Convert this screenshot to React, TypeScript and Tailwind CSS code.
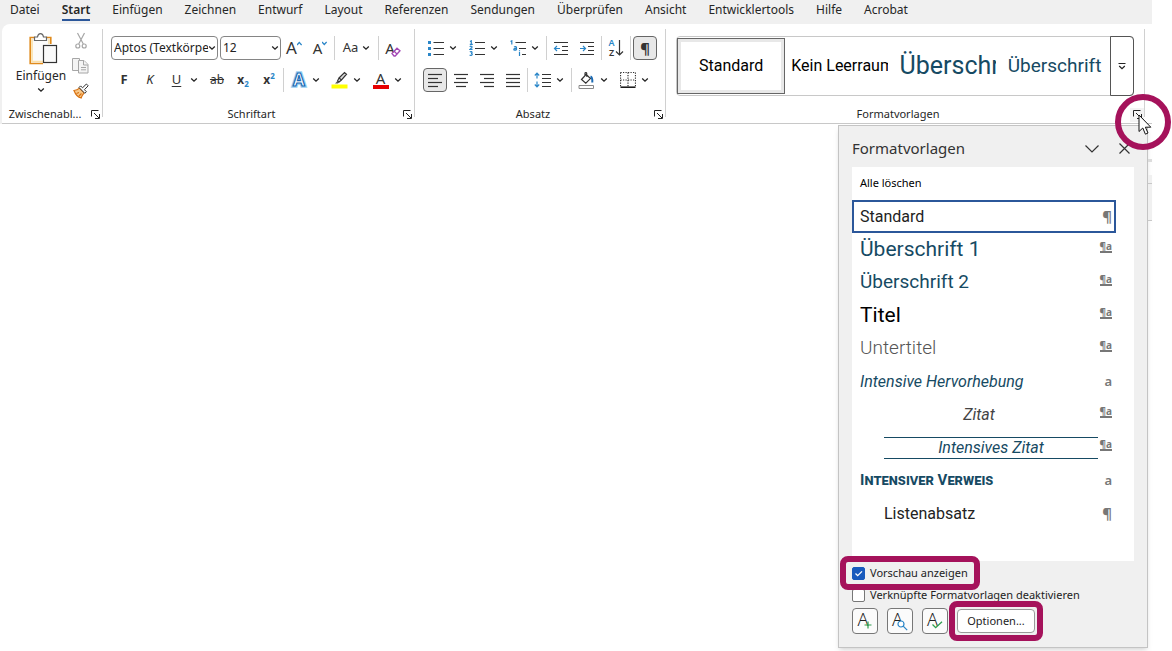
import { useState, type ReactNode } from 'react'
import clsx from 'clsx'

const tabs = [
  'Datei', 'Start', 'Einfügen', 'Zeichnen', 'Entwurf', 'Layout', 'Referenzen',
  'Sendungen', 'Überprüfen', 'Ansicht', 'Entwicklertools', 'Hilfe', 'Acrobat',
]

const gallery = [
  { name: 'Standard', className: 'text-base text-black text-center' },
  { name: 'Kein Leerraum', className: 'text-base text-black' },
  { name: 'Überschrift 1', className: 'text-[25px] text-[#164a63]' },
  { name: 'Überschrift 2', className: 'text-[19px] text-[#164a63]' },
]

type Mark = 'para' | 'char' | 'linked'

const styles: { name: string; mark: Mark; className: string }[] = [
  { name: 'Standard', mark: 'para', className: 'text-base text-[#222]' },
  { name: 'Überschrift 1', mark: 'linked', className: 'text-[21px] text-[#164a63]' },
  { name: 'Überschrift 2', mark: 'linked', className: 'text-[19px] text-[#164a63]' },
  { name: 'Titel', mark: 'linked', className: 'text-[21px] text-black' },
  { name: 'Untertitel', mark: 'linked', className: 'text-[19px] font-light text-[#555]' },
  { name: 'Intensive Hervorhebung', mark: 'char', className: 'text-base italic text-[#164a63]' },
  { name: 'Zitat', mark: 'linked', className: 'text-base italic text-center text-[#444]' },
  { name: 'Intensives Zitat', mark: 'linked', className: 'text-base italic text-center text-[#164a63] leading-5 border-y border-[#164a63] ml-6' },
  { name: 'Intensiver Verweis', mark: 'char', className: 'text-[15px] font-bold text-[#164a63] [font-variant:small-caps]' },
  { name: 'Listenabsatz', mark: 'para', className: 'text-base text-[#222] pl-6' },
]

function Chevron() {
  return (
    <svg width="8" height="6" viewBox="0 0 8 6" fill="none" stroke="#222" strokeWidth="1.3" className="shrink-0">
      <path d="M1.2 1.6 4 4.2 6.8 1.6" />
    </svg>
  )
}

function Tool({ label, active, children }: { label: string; active?: boolean; children: ReactNode }) {
  return (
    <button
      aria-label={label}
      className={clsx(
        'flex h-6 shrink-0 items-center justify-center text-[#333]',
        active ? 'mx-px w-6 rounded border border-[#666] bg-[#e8e8e8]' : 'w-[26px]',
      )}
    >
      {children}
    </button>
  )
}

function Split({ label, children }: { label: string; children: ReactNode }) {
  return (
    <button aria-label={label} className="flex h-6 w-[41px] shrink-0 items-center text-[#333]">
      <span className="flex w-[27px] justify-center">{children}</span>
      <Chevron />
    </button>
  )
}

function Sep() {
  return <span className="mx-px h-6 w-px shrink-0 bg-[#d0d0d0]" />
}

function Svg({ w = 16, h = 16, children }: { w?: number; h?: number; children: ReactNode }) {
  return (
    <svg width={w} height={h} viewBox={`0 0 ${w} ${h}`} fill="none" stroke="#333" strokeWidth="1.2" className="shrink-0">
      {children}
    </svg>
  )
}

function Lines({ rows }: { rows: [number, number][] }) {
  return (
    <Svg>
      {rows.map(([from, to], i) => (
        <path key={i} d={`M${from} ${2.5 + i * 4}H${to}`} />
      ))}
    </Svg>
  )
}

function LauncherIcon() {
  return (
    <svg width="9" height="9" viewBox="0 0 9 9" fill="none" stroke="#222">
      <path d="M.5 6.5v-6h7M3 3l5 5M8.5 4v4.5H4" />
    </svg>
  )
}

function Group({ title, className, marker, children }: { title: string; className?: string; marker?: ReactNode; children: ReactNode }) {
  return (
    <section className={clsx('relative flex h-[99px] flex-col', className)}>
      <div className="flex-1">{children}</div>
      <footer className="flex h-[17px] items-center text-[11px] text-[#262626]">
        <span className="flex-1 text-center">{title}</span>
        <span className="relative flex w-[14px] justify-center">
          <button aria-label={`${title} öffnen`} className={clsx('flex h-[14px] w-[14px] items-center justify-center', marker && 'bg-[#f3f3f3]')}>
            <LauncherIcon />
          </button>
          {marker}
        </span>
      </footer>
    </section>
  )
}

function Divider() {
  return <span className="mt-[5px] h-[88px] w-px shrink-0 bg-[#d0d0d0]" />
}

function Clipboard() {
  return (
    <div className="flex">
      <button className="flex w-[70px] flex-col items-center pt-2 pl-2 text-xs text-[#262626]">
        <svg width="30" height="34" viewBox="0 0 30 34" fill="none" className="mb-0.5 ml-1">
          <path d="M3 6.5h19v6h-6.500V31H3z" fill="#fbfbfb" />
          <path d="M7 5.500H2.200v26H15M18 5.500h4.800V12" stroke="#e08a1c" strokeWidth="1.600" />
          <path d="M4 7v22.500h11M21 7v5" stroke="#fbe0a8" strokeWidth="1.600" />
          <path d="M6.500 8.500V5h3c.3-2 1.500-3.300 3-3.300s2.700 1.300 3 3.300h3v3.500z" fill="#fff" stroke="#666" strokeWidth="1.200" />
          <rect x="15.500" y="13.500" width="13" height="17" fill="#fafafa" stroke="#333" strokeWidth="1.200" />
        </svg>
        <span className="leading-4">Einfügen</span>
        <span className="flex h-3 items-center"><Chevron /></span>
      </button>
      <div className="flex flex-col items-center pt-1">
        <button aria-label="Ausschneiden" className="flex h-[25px] items-center">
          <svg width="16" height="18" viewBox="0 0 16 18" fill="none" stroke="#a6a6a6" strokeWidth="1.200">
            <path d="M4.500 1 10.300 12M11.500 1 5.700 12" />
            <circle cx="4.800" cy="14" r="2" />
            <circle cx="11.200" cy="14" r="2" />
          </svg>
        </button>
        <button aria-label="Kopieren" className="flex h-[25px] items-center">
          <svg width="17" height="17" viewBox="0 0 17 17" fill="#f4f4f4" stroke="#a6a6a6">
            <path d="M6.500 13.500h-6V1.500h7V4" />
            <path d="M6.500 3.500h5.500l4 4v8.500h-9.500z" />
            <path d="M11.500 3.500v4.500H16M9 10.500h5M9 12.800h5" />
          </svg>
        </button>
        <button aria-label="Format übertragen" className="flex h-[25px] items-center">
          <svg width="16" height="16" viewBox="0 0 16 16" fill="none">
            <path d="M1 7.500c2 0 4-.8 5.500-2.300l4.600 4.600c-1.300 1.600-2.600 3.400-3 5.200C5.500 14.500 2.500 11.500 1 7.500z" fill="#f9c98a" stroke="#d8700f" strokeWidth="1.200" />
            <path d="M3.500 10.500l2.500-1M6 13l2.500-2.500" stroke="#d8700f" strokeWidth="1.200" />
            <path d="M6 4.500l5.800 5.800 1.600-1.600-2-2 3.800-3.900-1.800-1.800-3.900 3.800-1.900-1.900z" fill="#fff" stroke="#333" />
          </svg>
        </button>
      </div>
    </div>
  )
}

function FontTools() {
  return (
    <div className="flex flex-col gap-2 pt-3 pl-2">
      <div className="flex items-center">
        <div className="relative mr-0.5 flex items-center">
          <select aria-label="Schriftart" className="h-6 w-[107px] appearance-none overflow-hidden rounded border border-[#858585] bg-white pr-2 pl-0.5 text-xs text-[#222]">
            <option>Aptos (Textkörper)</option>
          </select>
          <span className="pointer-events-none absolute right-px flex bg-white pr-px"><Chevron /></span>
        </div>
        <div className="relative flex items-center">
          <select aria-label="Schriftgrad" className="h-6 w-[61px] appearance-none rounded border border-[#858585] bg-white pl-0.5 text-xs text-[#222]">
            <option>12</option>
          </select>
          <span className="pointer-events-none absolute right-px flex pr-px"><Chevron /></span>
        </div>
        <Tool label="Schriftgrad vergrößern">
          <span className="text-[17px] leading-5">A</span>
          <svg width="5" height="14" viewBox="0 0 5 14" fill="none" stroke="#2a86c8" strokeWidth="1.200"><path d="M0 4l2.300-2.500L4.600 4" /></svg>
        </Tool>
        <Tool label="Schriftgrad verkleinern">
          <span className="text-[15px] leading-5">A</span>
          <svg width="5" height="14" viewBox="0 0 5 14" fill="none" stroke="#2a86c8" strokeWidth="1.200"><path d="M0 1l2.300 2.500L4.600 1" /></svg>
        </Tool>
        <Sep />
        <button aria-label="Groß-/Kleinschreibung" className="flex h-6 w-[41px] items-center justify-center gap-1 text-[13px] text-[#333]">
          Aa <Chevron />
        </button>
        <Sep />
        <Tool label="Formatierung löschen">
          <span className="text-[15px] leading-5">A</span>
          <svg width="10" height="10" viewBox="0 0 10 10" fill="#fff" stroke="#a347b5" strokeWidth="1.300" className="mt-2 -ml-1">
            <path d="M1 6.500 6 1.200 9 3.800 4.200 9H3z" />
            <path d="M3.200 4.200l3 3" />
          </svg>
        </Tool>
      </div>
      <div className="flex items-center">
        <Tool label="Fett"><b className="text-[13px]">F</b></Tool>
        <Tool label="Kursiv"><i className="text-[13px]">K</i></Tool>
        <Split label="Unterstrichen"><u className="text-[13px] underline-offset-2">U</u></Split>
        <Tool label="Durchgestrichen"><s className="text-xs">ab</s></Tool>
        <Tool label="Tiefgestellt">
          <b className="text-xs">x</b><b className="mt-2 text-[8px] text-[#2a86c8]">2</b>
        </Tool>
        <Tool label="Hochgestellt">
          <b className="text-xs">x</b><b className="mb-2 text-[8px] text-[#2a86c8]">2</b>
        </Tool>
        <Sep />
        <Split label="Texteffekte">
          <svg width="18" height="20" viewBox="0 0 18 20" className="overflow-visible">
            <text x="9" y="16" textAnchor="middle" fontSize="17" fontWeight="700" fill="#fff" stroke="#9dd0f2" strokeWidth="3.500">A</text>
            <text x="9" y="16" textAnchor="middle" fontSize="17" fontWeight="700" fill="#fff" stroke="#1b6ab3" strokeWidth="1.200">A</text>
          </svg>
        </Split>
        <Split label="Texthervorhebungsfarbe">
          <Svg w={17} h={18}>
            <path d="M8 7 13.500 1.500 15.500 3.200 10.500 9zM8 7l-1.500 3 1.300 1.200L10.500 9" fill="#ddd" />
            <path d="M6.500 10 4 12.500h3L8 11.200z" fill="#555" stroke="none" />
            <path d="M.500 15.500h16" stroke="#ffff00" strokeWidth="4" />
          </Svg>
        </Split>
        <Split label="Schriftfarbe">
          <span className="flex w-4 flex-col items-center">
            <span className="text-[15px] leading-[14px]">A</span>
            <span className="h-1 w-4 bg-[#e60000]" />
          </span>
        </Split>
      </div>
    </div>
  )
}

function ParagraphTools() {
  return (
    <div className="flex flex-col gap-2 pt-3 pl-[7px]">
      <div className="flex items-center">
        <Split label="Aufzählungszeichen">
          <Svg>
            <path d="M0 2.500h3M0 8.500h3M0 14.500h3" stroke="#2a86c8" strokeWidth="3" />
            <path d="M5.500 2.500H16M5.500 8.500H16M5.500 14.500H16" />
          </Svg>
        </Split>
        <Split label="Nummerierung">
          <Svg>
            <path d="M1 1.500 2.300.8v3.400M.8 4.300h3M.8 6.800c.8-1 2.500-.6 2.200.5L.9 9.400h2.700M.8 11.900c1-.7 2.500-.3 2.200.7-.1.600-1 .7-1 .7s1.300 0 1.300 1c0 1.200-1.700 1.400-2.700.7" stroke="#2a86c8" />
            <path d="M6 2.500H16M6 8.500H16M6 14.500H16" />
          </Svg>
        </Split>
        <Split label="Liste mit mehreren Ebenen">
          <Svg>
            <path d="M.5 1.500 1.800.8v3.700M4 6.900c1-.6 2.500-.4 2.500.8v2.600M6.400 8.500c-1.400-.2-2.600.1-2.600.9s1.600 1.200 2.600.1M9.500 12v4M9.500 10.200v1" stroke="#2a86c8" />
            <path d="M5.500 2.500H16M9 8.500h7M12 14.500h4" />
          </Svg>
        </Split>
        <Sep />
        <Tool label="Einzug verkleinern">
          <Svg>
            <path d="M1 2.500h14M9 6.500h6M9 10.500h6M1 14.500h14" />
            <path d="M7 8.500H1.500M4 6 1.500 8.500 4 11" stroke="#2a86c8" />
          </Svg>
        </Tool>
        <Tool label="Einzug vergrößern">
          <Svg>
            <path d="M1 2.500h14M9 6.500h6M9 10.500h6M1 14.500h14" />
            <path d="M1 8.500h5.500M4 6l2.500 2.500L4 11" stroke="#2a86c8" />
          </Svg>
        </Tool>
        <Sep />
        <Tool label="Sortieren">
          <span className="flex flex-col text-[9px] leading-[10px] font-semibold">
            <span className="text-[#2a86c8]">A</span>
            <span>Z</span>
          </span>
          <Svg w={9} h={18}><path d="M4.500 1v15M1 12.500l3.500 3.500L8 12.500" /></Svg>
        </Tool>
        <Sep />
        <Tool label="Alle anzeigen" active><span className="text-[15px] font-bold">¶</span></Tool>
      </div>
      <div className="flex items-center">
        <Tool label="Linksbündig" active><Lines rows={[[1, 15], [1, 11], [1, 15], [1, 11]]} /></Tool>
        <Tool label="Zentriert"><Lines rows={[[1, 15], [3, 13], [1, 15], [3, 13]]} /></Tool>
        <Tool label="Rechtsbündig"><Lines rows={[[1, 15], [5, 15], [1, 15], [5, 15]]} /></Tool>
        <Tool label="Blocksatz"><Lines rows={[[1, 15], [1, 15], [1, 15], [1, 15]]} /></Tool>
        <Sep />
        <Split label="Zeilenabstand">
          <Svg w={17}>
            <path d="M3 1.500v5M3 9.500v5M.8 3.500 3 1.200l2.200 2.300M.8 12.500 3 14.800l2.200-2.300" stroke="#2a86c8" />
            <path d="M8 2.500h9M8 6.500h9M8 10.500h9M8 14.500h9" />
          </Svg>
        </Split>
        <Sep />
        <Split label="Schattierung">
          <Svg w={17} h={17}>
            <path d="M3.500 7.500 8.200 2.300l4.200 4.300-4.600 4.600zM7 3.500V1.300c0-.8 1.700-.8 1.700 0v3.400" />
            <path d="M12.500 4.500c1.500.5 2 2.500 1.800 6" stroke="#1b6ab3" strokeWidth="2" />
            <path d="M1 13.500h14.500v3H1z" stroke="#888" strokeWidth="1" />
          </Svg>
        </Split>
        <Split label="Rahmen">
          <Svg>
            <path d="M.500.500h15v15M.500.500v15M8 .500v15M.500 8h15" strokeDasharray="1.200 1.300" />
            <path d="M.500 15.200h15" strokeWidth="1.500" stroke="#111" />
          </Svg>
        </Split>
      </div>
    </div>
  )
}

function StyleGallery() {
  return (
    <div className="mx-[10px] mt-3 flex h-[60px] rounded border border-[#c8c8c8] font-['Roboto',sans-serif]">
      {gallery.map((item, i) => (
        <button
          key={item.name}
          className={clsx(
            'flex min-w-0 flex-1 items-center',
            i === 0 ? 'my-px border border-[#666] px-[5px] ring-3 ring-[#e8e8e8] ring-inset' : 'px-[6px]',
          )}
        >
          <span className={clsx('w-full overflow-hidden whitespace-nowrap', i > 0 && 'text-left', item.className)}>{item.name}</span>
        </button>
      ))}
      <button aria-label="Weitere Formatvorlagen" className="-my-px -mr-px flex w-6 shrink-0 items-center justify-center rounded-r border border-[#555]">
        <svg width="8" height="8" viewBox="0 0 8 8" fill="none" stroke="#222" strokeWidth="1.200">
          <path d="M.500 1.500h7M1.200 4 4 6.700 6.800 4" />
        </svg>
      </button>
    </div>
  )
}

function StyleMark({ mark }: { mark: Mark }) {
  if (mark === 'para') return <span className="text-[15px] leading-none font-bold text-[#777]">¶</span>
  if (mark === 'char') return <span className="text-[13px] leading-none font-semibold text-[#777]">a</span>
  return <span className="mb-1 border-b-2 border-[#777] text-[10px] leading-[9px] font-bold text-[#777]">¶a</span>
}

/* Ring and mouse pointer that show where to click */
function ClickMarker() {
  return (
    <>
      <span className="pointer-events-none absolute -top-[14px] -left-[15px] h-14 w-14 rounded-full border-[6px] border-[#a5125b]" />
      <svg width="14" height="22" viewBox="0 0 14 22" className="pointer-events-none absolute top-[6px] left-2">
        <path d="M1 1v16.500l3.800-3.500 2.600 6.200 2.600-1.200-2.600-5.800h5.400z" fill="#fff" stroke="#111" />
      </svg>
    </>
  )
}

function Highlight({ className }: { className: string }) {
  return <span className={clsx('pointer-events-none absolute rounded-lg border-[6px] border-[#a5125b]', className)} />
}

function PaneButton({ label, children }: { label: string; children: ReactNode }) {
  return (
    <button aria-label={label} className="flex h-[26px] w-[26px] items-center justify-center rounded border border-[#777] bg-[#fbfbfb]">
      <span className="mb-1 text-[18px] leading-5 font-light">A</span>
      {children}
    </button>
  )
}

function StylesPane() {
  const [selected, setSelected] = useState('Standard')

  return (
    <aside className="w-[310px] shrink-0 border border-[#c4c4c4] bg-[#f0f0f0] px-[13px] pb-[13px] shadow-md">
      <header className="flex h-[41px] items-center pt-1 text-[#333]">
        <h2 className="flex-1 text-[15px]">Formatvorlagen</h2>
        <button aria-label="Optionen für Aufgabenbereich" className="mr-5">
          <Svg w={14} h={10}><path d="M.500 1.500 7 8l6.500-6.500" /></Svg>
        </button>
        <button aria-label="Schließen" className="mr-1">
          <Svg w={11} h={11}><path d="M.500.500l10 10M10.500.500l-10 10" /></Svg>
        </button>
      </header>

      <div className="bg-white pr-[18px] pb-[31px]">
        <button className="block h-[33px] w-full pl-2 text-left text-[11px] text-black">Alle löschen</button>
        <ul>
          {styles.map((s) => (
            <li key={s.name}>
              <button
                onClick={() => setSelected(s.name)}
                className={clsx(
                  'flex h-[33px] w-full items-center border-2 pr-[2px] pl-[6px] text-left',
                  selected === s.name ? 'border-[#2b579a]' : 'border-transparent',
                )}
              >
                <span className={clsx("flex-1 font-['Roboto',sans-serif]", s.className)}>{s.name}</span>
                <span className="flex w-[14px] justify-end"><StyleMark mark={s.mark} /></span>
              </button>
            </li>
          ))}
        </ul>
      </div>

      <div className="flex flex-col items-start text-[11px] text-[#222]">
        <label className="relative z-10 mt-[3px] flex h-[18px] items-center">
          <input type="checkbox" defaultChecked className="peer h-[13px] w-[13px] appearance-none rounded-xs border border-[#777] bg-white checked:border-[#185abd] checked:bg-[#185abd]" />
          <svg width="13" height="13" viewBox="0 0 13 13" fill="none" stroke="#fff" strokeWidth="1.300" className="absolute left-0 hidden peer-checked:block">
            <path d="M3.500 6.500l2.200 2.200 4.300-4.300" />
          </svg>
          <span className="ml-[5px]">Vorschau anzeigen</span>
          <Highlight className="-inset-x-3 -inset-y-2" />
        </label>
        <label className="mt-1 flex h-[18px] items-center">
          <input type="checkbox" className="h-[13px] w-[13px] appearance-none rounded-xs border border-[#777] bg-white" />
          <span className="ml-[5px]">Verknüpfte Formatvorlagen deaktivieren</span>
        </label>
        <div className="mt-1 flex items-center gap-[9px]">
          <PaneButton label="Neue Formatvorlage">
            <svg width="8" height="8" viewBox="0 0 8 8" stroke="#2f9e4f" strokeWidth="1.200" className="mt-2 -ml-1"><path d="M4 .500v7M.500 4h7" /></svg>
          </PaneButton>
          <PaneButton label="Formatinspektor">
            <svg width="11" height="11" viewBox="0 0 11 11" fill="#fff" stroke="#2a86c8" strokeWidth="1.200" className="mt-2 -ml-1.5"><circle cx="4" cy="4" r="3" /><path d="M6.200 6.200l4 4" /></svg>
          </PaneButton>
          <PaneButton label="Formatvorlagen verwalten">
            <svg width="11" height="8" viewBox="0 0 11 8" fill="none" stroke="#2f9e4f" strokeWidth="1.300" className="mt-2 -ml-1.5"><path d="M.500 3.500l3.200 3.200L10 .700" /></svg>
          </PaneButton>
          <span className="relative">
            <button className="block h-6 w-[78px] rounded border border-[#999] bg-white">Optionen...</button>
            <Highlight className="-inset-2" />
          </span>
        </div>
      </div>
    </aside>
  )
}

export default function App() {
  return (
    <div className="min-h-screen bg-white font-['Noto_Sans',sans-serif] text-[#262626]">
      <header className="relative z-10 mr-5 bg-[#f0f0f0]">
        <nav className="flex h-6 items-start gap-[22px] pl-[10px] text-xs">
          {tabs.map((tab) => (
            <a
              key={tab}
              href="#"
              className={clsx('h-[21px] border-b-2 leading-[19px]', tab === 'Start' ? 'border-[#2b579a] font-semibold' : 'border-transparent')}
            >
              {tab}
            </a>
          ))}
        </nav>
        <div className="ml-[2px] flex rounded-tl-lg border-b border-[#c8c8c8] bg-white">
          <Group title="Zwischenabl..." className="w-[100px]"><Clipboard /></Group>
          <Divider />
          <Group title="Schriftart" className="w-[311px]"><FontTools /></Group>
          <Divider />
          <Group title="Absatz" className="w-[250px]"><ParagraphTools /></Group>
          <Divider />
          <Group title="Formatvorlagen" className="min-w-0 flex-1" marker={<ClickMarker />}><StyleGallery /></Group>
          <Divider />
          <span className="w-[7px]" />
        </div>
      </header>

      <main className="flex justify-end pt-px pr-5">
        <StylesPane />
        {/* edge of the document window behind the pane */}
        <div className="w-1">
          <div className="mt-[34px] h-[3px] bg-[#dcdcdc]" />
          <div className="mt-[13px] h-2 bg-[#f0f0f0]" />
          <div className="h-[38px] border-y border-[#c8c8c8] bg-[#f0f0f0]" />
        </div>
      </main>
    </div>
  )
}
